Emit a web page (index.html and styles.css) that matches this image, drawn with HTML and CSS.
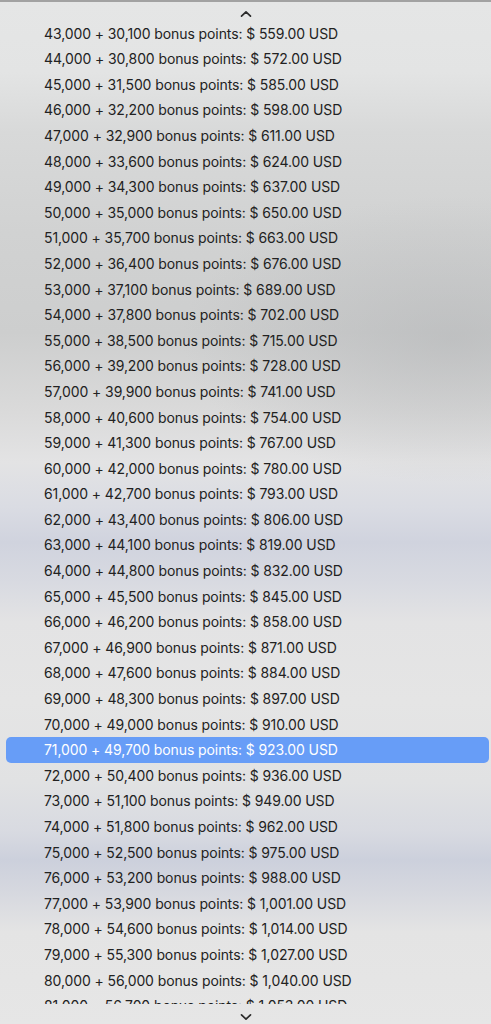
FILE: index.html
```html
<!DOCTYPE html>
<html lang="en">
<head>
<meta charset="utf-8">
<title>Menu</title>
<link rel="stylesheet" href="styles.css">
</head>
<body>
<div class="menu">
  <div class="scroller up">
    <svg width="12" height="8" viewBox="0 0 12 8"><path d="M1.5 6.2 L6 1.8 L10.5 6.2" fill="none" stroke="#2b2b2b" stroke-width="1.7" stroke-linecap="round" stroke-linejoin="round"/></svg>
  </div>
  <ul class="list">
    <li class="item">43,000 + 30,100 bonus points: $ 559.00 USD</li>
    <li class="item">44,000 + 30,800 bonus points: $ 572.00 USD</li>
    <li class="item">45,000 + 31,500 bonus points: $ 585.00 USD</li>
    <li class="item">46,000 + 32,200 bonus points: $ 598.00 USD</li>
    <li class="item">47,000 + 32,900 bonus points: $ 611.00 USD</li>
    <li class="item">48,000 + 33,600 bonus points: $ 624.00 USD</li>
    <li class="item">49,000 + 34,300 bonus points: $ 637.00 USD</li>
    <li class="item">50,000 + 35,000 bonus points: $ 650.00 USD</li>
    <li class="item">51,000 + 35,700 bonus points: $ 663.00 USD</li>
    <li class="item">52,000 + 36,400 bonus points: $ 676.00 USD</li>
    <li class="item">53,000 + 37,100 bonus points: $ 689.00 USD</li>
    <li class="item">54,000 + 37,800 bonus points: $ 702.00 USD</li>
    <li class="item">55,000 + 38,500 bonus points: $ 715.00 USD</li>
    <li class="item">56,000 + 39,200 bonus points: $ 728.00 USD</li>
    <li class="item">57,000 + 39,900 bonus points: $ 741.00 USD</li>
    <li class="item">58,000 + 40,600 bonus points: $ 754.00 USD</li>
    <li class="item">59,000 + 41,300 bonus points: $ 767.00 USD</li>
    <li class="item">60,000 + 42,000 bonus points: $ 780.00 USD</li>
    <li class="item">61,000 + 42,700 bonus points: $ 793.00 USD</li>
    <li class="item">62,000 + 43,400 bonus points: $ 806.00 USD</li>
    <li class="item">63,000 + 44,100 bonus points: $ 819.00 USD</li>
    <li class="item">64,000 + 44,800 bonus points: $ 832.00 USD</li>
    <li class="item">65,000 + 45,500 bonus points: $ 845.00 USD</li>
    <li class="item">66,000 + 46,200 bonus points: $ 858.00 USD</li>
    <li class="item">67,000 + 46,900 bonus points: $ 871.00 USD</li>
    <li class="item">68,000 + 47,600 bonus points: $ 884.00 USD</li>
    <li class="item">69,000 + 48,300 bonus points: $ 897.00 USD</li>
    <li class="item">70,000 + 49,000 bonus points: $ 910.00 USD</li>
    <li class="item selected">71,000 + 49,700 bonus points: $ 923.00 USD</li>
    <li class="item">72,000 + 50,400 bonus points: $ 936.00 USD</li>
    <li class="item">73,000 + 51,100 bonus points: $ 949.00 USD</li>
    <li class="item">74,000 + 51,800 bonus points: $ 962.00 USD</li>
    <li class="item">75,000 + 52,500 bonus points: $ 975.00 USD</li>
    <li class="item">76,000 + 53,200 bonus points: $ 988.00 USD</li>
    <li class="item">77,000 + 53,900 bonus points: $ 1,001.00 USD</li>
    <li class="item">78,000 + 54,600 bonus points: $ 1,014.00 USD</li>
    <li class="item">79,000 + 55,300 bonus points: $ 1,027.00 USD</li>
    <li class="item">80,000 + 56,000 bonus points: $ 1,040.00 USD</li>
    <li class="item">81,000 + 56,700 bonus points: $ 1,053.00 USD</li>
  </ul>
  <div class="scroller down">
    <svg width="12" height="8" viewBox="0 0 12 8"><path d="M1.5 1.8 L6 6.2 L10.5 1.8" fill="none" stroke="#2b2b2b" stroke-width="1.7" stroke-linecap="round" stroke-linejoin="round"/></svg>
  </div>
</div>
</body>
</html>
```
FILE: styles.css
```css
html, body {
  margin: 0;
  padding: 0;
  height: 1024px;
  overflow: hidden;
}
body {
  background: #e6e6e6;
  font-family: Inter, "Noto Sans", "Liberation Sans", sans-serif;
}
.menu {
  height: 1022px;
  border-top: 2px solid #a2a2a2;
  display: flex;
  flex-direction: column;
  background:
    radial-gradient(ellipse 55% 14% at 92% 33%, rgba(176,178,180,0.5), rgba(176,178,180,0)),
    linear-gradient(to bottom,
      #e5e6e6 0px, #e3e4e4 70px, #d8d9d9 130px, #d1d2d2 230px,
      #cdcece 330px, #dadada 410px, #e3e3e4 460px, #dadce3 505px,
      #d0d3de 540px, #d8dae1 580px, #e3e3e4 620px, #e5e5e5 700px,
      #e1e2e3 780px, #d8dae1 830px, #ccd0dc 858px, #d6d8df 890px,
      #e4e4e4 930px, #e6e6e6 1024px);
}
.scroller {
  display: flex;
  justify-content: center;
  align-items: center;
  flex: none;
}
.up {
  height: 18.6px;
  align-items: flex-end;
}
.up svg {
  margin-bottom: 3px;
}
.down {
  height: 20px;
  align-items: flex-start;
}
.down svg {
  margin-top: 9px;
}
.list {
  list-style: none;
  margin: 0;
  padding: 0;
  flex: 1;
  overflow: hidden;
}
.item {
  height: 25.6px;
  line-height: 25.6px;
  margin: 0 2px 0 6px;
  padding-left: 38px;
  font-size: 14px;
  letter-spacing: -0.1px;
  color: #222222;
  border-radius: 5px;
  white-space: nowrap;
}
.item.selected {
  background: #679df7;
  color: #ffffff;
}
```
